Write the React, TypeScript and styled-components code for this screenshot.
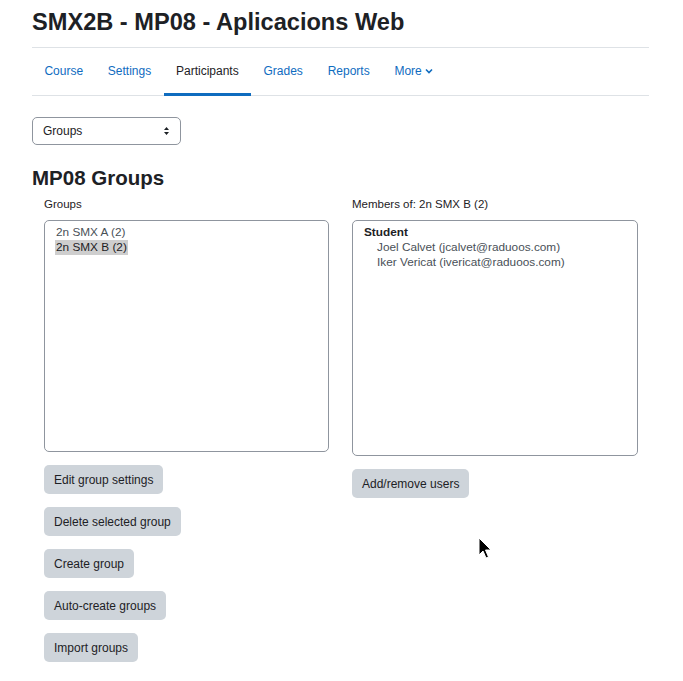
import React from "react";
import styled, { createGlobalStyle } from "styled-components";

const Global = createGlobalStyle`
  html, body { margin: 0; padding: 0; background: #fff; }
  body { font-family: "Liberation Sans", Arial, sans-serif; color: #1d2125; font-size: 13px; }
`;

const Page = styled.div`
  width: 683px;
  height: 681px;
  position: relative;
  overflow: hidden;
  padding: 0 34px 0 32px;
  box-sizing: border-box;
`;

const Title = styled.h1`
  margin: 0;
  padding-top: 8px;
  height: 48px;
  font-size: 23.6px;
  font-weight: 700;
  line-height: 28px;
  border-bottom: 1px solid #dee2e6;
  box-sizing: border-box;
`;

const Nav = styled.nav`
  display: flex;
  border-bottom: 1px solid #dee2e6;
  height: 48px;
  box-sizing: border-box;
`;

const NavItem = styled.a<{ $active?: boolean }>`
  display: flex;
  align-items: center;
  padding: 0 12.4px;
  font-size: 12px;
  color: ${(p) => (p.$active ? "#1d2125" : "#0f6cbf")};
  border-bottom: 3px solid ${(p) => (p.$active ? "#0f6cbf" : "transparent")};
  margin-bottom: -1px;
  text-decoration: none;
  gap: 3px;
`;

const Select = styled.div`
  margin-top: 21px;
  width: 149px;
  height: 28px;
  box-sizing: border-box;
  border: 1px solid #8f959e;
  border-radius: 5px;
  display: flex;
  align-items: center;
  justify-content: space-between;
  padding: 0 10px 0 10px;
  font-size: 12px;
`;

const H2 = styled.h2`
  margin: 21px 0 0;
  font-size: 20.5px;
  line-height: 24px;
  font-weight: 700;
`;

const Columns = styled.div`
  display: grid;
  grid-template-columns: 285px 286px;
  column-gap: 23px;
  padding-left: 12px;
  margin-top: 7px;
`;

const Col = styled.div`
  display: flex;
  flex-direction: column;
`;

const Label = styled.div`
  font-size: 11.5px;
  line-height: 14px;
  margin-bottom: 9px;
`;

const ListBox = styled.div<{ $h: number }>`
  height: ${(p) => p.$h}px;
  border: 1px solid #8f959e;
  border-radius: 5px;
  box-sizing: border-box;
  padding: 4px 10px;
  font-size: 11.8px;
  line-height: 15px;
`;

const Option = styled.div<{ $sel?: boolean; $indent?: boolean; $bold?: boolean }>`
  display: inline-block;
  background: ${(p) => (p.$sel ? "#cecece" : "transparent")};
  color: ${(p) => (p.$sel || p.$bold ? "#1d2125" : "#495057")};
  font-weight: ${(p) => (p.$bold ? 700 : 400)};
  padding: 0 1px;
  padding-left: ${(p) => (p.$indent ? "14px" : "1px")};
`;

const OptRow = styled.div``;

const Buttons = styled.div`
  display: flex;
  flex-direction: column;
  align-items: flex-start;
  gap: 13px;
  margin-top: 13px;
`;

const Button = styled.button`
  font-family: inherit;
  font-size: 12px;
  color: #1d2125;
  background: #ced4da;
  border: none;
  border-radius: 5px;
  height: 29px;
  padding: 0 10px;
  cursor: pointer;
`;

const Cursor = styled.svg`
  position: absolute;
  left: 478px;
  top: 537px;
`;

export default function App() {
  return (
    <>
      <Global />
      <Page>
        <Title>SMX2B - MP08 - Aplicacions Web</Title>
        <Nav>
          <NavItem>Course</NavItem>
          <NavItem>Settings</NavItem>
          <NavItem $active>Participants</NavItem>
          <NavItem>Grades</NavItem>
          <NavItem>Reports</NavItem>
          <NavItem>
            More
            <svg width="8" height="6" viewBox="0 0 8 6">
              <path d="M1 1.5 L4 4.5 L7 1.5" stroke="#0f6cbf" strokeWidth="1.6" fill="none" />
            </svg>
          </NavItem>
        </Nav>
        <Select>
          <span>Groups</span>
          <svg width="7" height="10" viewBox="0 0 7 10">
            <path d="M3.5 1 L6 4 H1 Z M3.5 9 L6 6 H1 Z" fill="#1d2125" />
          </svg>
        </Select>
        <H2>MP08 Groups</H2>
        <Columns>
          <Col>
            <Label>Groups</Label>
            <ListBox $h={232}>
              <OptRow><Option>2n SMX A (2)</Option></OptRow>
              <OptRow><Option $sel>2n SMX B (2)</Option></OptRow>
            </ListBox>
            <Buttons>
              <Button>Edit group settings</Button>
              <Button>Delete selected group</Button>
              <Button>Create group</Button>
              <Button>Auto-create groups</Button>
              <Button>Import groups</Button>
            </Buttons>
          </Col>
          <Col>
            <Label>Members of: 2n SMX B (2)</Label>
            <ListBox $h={236}>
              <OptRow><Option $bold>Student</Option></OptRow>
              <OptRow><Option $indent>Joel Calvet (jcalvet@raduoos.com)</Option></OptRow>
              <OptRow><Option $indent>Iker Vericat (ivericat@raduoos.com)</Option></OptRow>
            </ListBox>
            <Buttons>
              <Button>Add/remove users</Button>
            </Buttons>
          </Col>
        </Columns>
        <Cursor width="14" height="24" viewBox="0 0 14 24">
          <path d="M1 1 L1 18 L5 14 L8 21 L10.5 20 L7.5 13 L13 13 Z" fill="#000" stroke="#fff" strokeWidth="1" />
        </Cursor>
      </Page>
    </>
  );
}
